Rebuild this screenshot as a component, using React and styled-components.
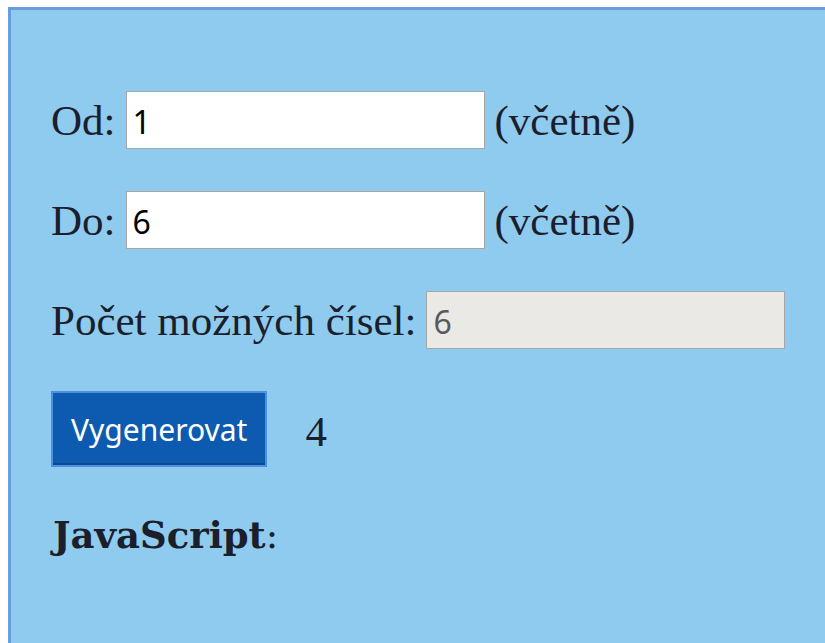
import React, { useState } from "react";
import styled, { createGlobalStyle } from "styled-components";

const GlobalStyle = createGlobalStyle`
  html, body {
    margin: 0;
    background: #fff;
    overflow: hidden;
  }
  body {
    padding: 7px 0 0 8px;
  }
`;

const Panel = styled.div`
  width: 860px;
  min-height: 700px;
  box-sizing: border-box;
  background: #8ecbef;
  border: 3px solid #6a9de0;
  border-right: none;
  padding: 81px 40px 0 40px;
  font-family: "Liberation Serif", "Times New Roman", serif;
  font-size: 43px;
  color: #1b1e2b;
`;

const Row = styled.div`
  display: flex;
  align-items: center;
  gap: ${(props) => props.gap || "10px"};
  height: ${(props) => props.height || "58px"};
  margin-bottom: ${(props) => props.mb || "42px"};
`;

const Label = styled.span`
  white-space: nowrap;
`;

const Field = styled.input`
  width: 359px;
  height: 58px;
  box-sizing: border-box;
  border: 1px solid #a6a6a6;
  padding: 2px 6px 0;
  font-family: "Noto Sans", "Open Sans", sans-serif;
  font-size: 32px;
  color: ${(props) => (props.disabled ? "#5a5a5a" : "#000")};
  background: ${(props) => (props.disabled ? "#ebe9e5" : "#fff")};
  outline: none;
`;

const Button = styled.button`
  height: 76px;
  padding: 0 18px;
  box-sizing: border-box;
  background: #0d5bb0;
  color: #fff;
  border: 2px solid #4f8fe0;
  box-shadow: inset 0 -2px 0 #0a4a92;
  font-family: "Noto Sans", "Open Sans", sans-serif;
  font-size: 30px;
  cursor: pointer;
`;

const Result = styled.span`
  margin-left: 28px;
  padding-top: 4px;
`;

const Title = styled.div`
  padding-left: 2px;
  font-family: "DejaVu Serif", "Liberation Serif", serif;
  font-size: 37px;
  b {
    font-weight: 700;
  }
`;

export default function App() {
  const [od, setOd] = useState("1");
  const [doo, setDoo] = useState("6");
  const [result, setResult] = useState(4);

  const count = Math.max(0, Number(doo) - Number(od) + 1);

  const generate = () => {
    const a = Number(od);
    const b = Number(doo);
    setResult(Math.floor(Math.random() * (b - a + 1)) + a);
  };

  return (
    <>
      <GlobalStyle />
      <Panel>
        <Row>
          <Label>Od:</Label>
          <Field value={od} onChange={(e) => setOd(e.target.value)} />
          <Label>(včetně)</Label>
        </Row>
        <Row>
          <Label>Do:</Label>
          <Field value={doo} onChange={(e) => setDoo(e.target.value)} />
          <Label>(včetně)</Label>
        </Row>
        <Row>
          <Label>Počet možných čísel:</Label>
          <Field value={count} disabled readOnly />
        </Row>
        <Row height="76px" mb="46px" gap="10px">
          <Button onClick={generate}>Vygenerovat</Button>
          <Result>{result}</Result>
        </Row>
        <Title>
          <b>JavaScript</b>:
        </Title>
      </Panel>
    </>
  );
}
